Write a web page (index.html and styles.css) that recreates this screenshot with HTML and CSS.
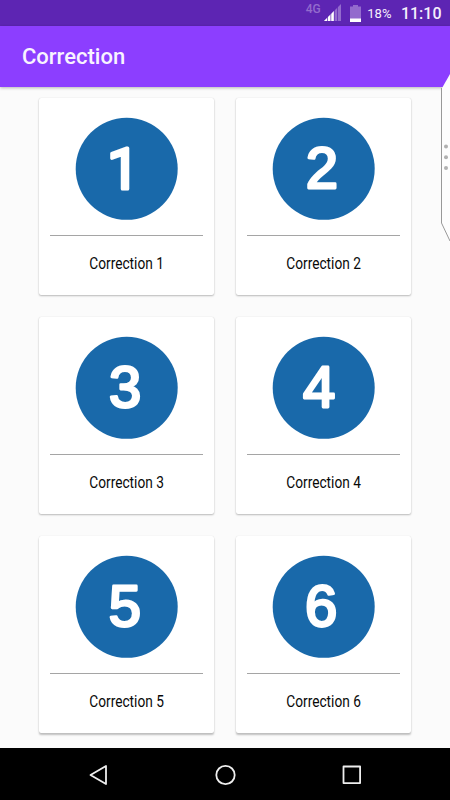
FILE: index.html
```html
<!DOCTYPE html>
<html lang="en">
<head>
<meta charset="utf-8">
<title>Correction</title>
<link rel="stylesheet" href="styles.css">
</head>
<body>
<div class="screen">
  <div class="status">
    <span class="network">4G</span>
    <svg class="signal" width="18" height="17" viewBox="0 0 18 17">
      <path d="M0 17 17 0V17Z" fill="#936bcd"/>
      <path d="M0 17 10 7V17Z" fill="#fff"/>
      <path d="M3.5 10V17M6.8 7V17M10.3 4V17M13.5 0V17" stroke="#5d25b3" stroke-width=".7"/>
    </svg>
    <svg class="battery" width="11" height="17" viewBox="0 0 11 17">
      <path d="M3 0H8V1.5H11V17H0V1.5H3Z" fill="#936bcd"/>
      <path d="M0 13.5H11V17H0Z" fill="#fff"/>
    </svg>
    <span class="percent">18%</span>
    <span class="clock">11:10</span>
  </div>
  <header class="appbar"><h1>Correction</h1></header>
  <main class="cards">
    <article class="card">
      <svg class="badge" viewBox="0 0 102 102"><circle cx="50.7" cy="50.8" r="51"/><text class="one" x="47.2" y="70.5">1</text></svg>
      <p class="label"><span>Correction 1</span></p>
    </article>
    <article class="card">
      <svg class="badge" viewBox="0 0 102 102"><circle cx="50.7" cy="50.8" r="51"/><text x="49" y="70.3">2</text></svg>
      <p class="label"><span>Correction 2</span></p>
    </article>
    <article class="card">
      <svg class="badge" viewBox="0 0 102 102"><circle cx="50.7" cy="50.8" r="51"/><text x="49.2" y="70.3">3</text></svg>
      <p class="label"><span>Correction 3</span></p>
    </article>
    <article class="card">
      <svg class="badge" viewBox="0 0 102 102"><circle cx="50.7" cy="50.8" r="51"/><text x="46.2" y="70.3">4</text></svg>
      <p class="label"><span>Correction 4</span></p>
    </article>
    <article class="card">
      <svg class="badge" viewBox="0 0 102 102"><circle cx="50.7" cy="50.8" r="51"/><text x="48.8" y="70.3">5</text></svg>
      <p class="label"><span>Correction 5</span></p>
    </article>
    <article class="card">
      <svg class="badge" viewBox="0 0 102 102"><circle cx="50.7" cy="50.8" r="51"/><text x="48.2" y="70.3">6</text></svg>
      <p class="label"><span>Correction 6</span></p>
    </article>
  </main>
  <nav class="navbar">
    <svg width="22" height="22" viewBox="0 0 22 22"><path d="M2.5 11 18 2V20Z"/></svg>
    <svg width="22" height="22" viewBox="0 0 22 22"><circle cx="10.5" cy="11" r="9.2"/></svg>
    <svg width="22" height="22" viewBox="0 0 22 22"><rect x="2.5" y="2.5" width="16.6" height="16.6"/></svg>
  </nav>
  <svg class="edge" width="9" height="168" viewBox="0 0 9 168">
    <path d="M9 0 .5 15V149L9 167" fill="#fdfdfd"/>
    <path d="M.5 14V149L9 167" fill="none" stroke="#999"/>
    <g fill="#b0b0b0"><circle cx="5" cy="72.5" r="2"/><circle cx="5" cy="83.2" r="2"/><circle cx="5" cy="94" r="2"/></g>
  </svg>
</div>
</body>
</html>
```
FILE: styles.css
```css
* { box-sizing: border-box; }
body { margin: 0; font-family: Roboto, "Liberation Sans", sans-serif; }
svg { display: block; }
.screen {
  position: relative;
  display: flex;
  flex-direction: column;
  width: 450px;
  height: 800px;
  overflow: hidden;
  background: #fbfbfb;
}
.status {
  display: flex;
  justify-content: flex-end;
  height: 26px;
  padding-right: 8.5px;
  background: #5d25b3;
  color: #f5effc;
}
.network {
  margin: 2px 3px 0 0;
  font-size: 12px;
  line-height: 14px;
  font-weight: 500;
  color: #936bcd;
}
.signal { margin: 4px 8px 0 0; }
.battery { margin: 4.5px 6.5px 0 0; }
.percent { margin-right: 9.5px; font-size: 13px; line-height: 28px; }
.clock { font-size: 16px; line-height: 28px; font-weight: 500; }
.appbar {
  display: flex;
  align-items: center;
  height: 61px;
  padding-left: 22px;
  background: #8c3eff;
  box-shadow: 0 1px 3px rgba(0, 0, 0, .28);
}
.appbar h1 { margin: 1px 0 0; color: #f8f3ff; font-size: 22px; font-weight: 500; line-height: 26px; }
.cards {
  flex: 1;
  display: grid;
  grid-template-columns: 175px 175px;
  grid-auto-rows: 197px;
  align-content: start;
  gap: 22px;
  padding: 11px 0 0 39px;
}
.card {
  display: flex;
  flex-direction: column;
  align-items: center;
  padding: 20px 11px 0;
  border-radius: 2px;
  background: #fff;
  box-shadow: 0 1px 2px rgba(0, 0, 0, .26), 0 0 1px rgba(0, 0, 0, .14);
}
.card:nth-child(n+5) { box-shadow: 0 2px 2px rgba(0, 0, 0, .24), 0 0 1px rgba(0, 0, 0, .16); }
.badge { width: 102px; height: 102px; overflow: visible; }
.badge circle { fill: #1969aa; }
.badge text {
  font-family: "Liberation Sans", sans-serif;
  font-size: 58px;
  text-anchor: middle;
  fill: #fff;
  stroke: #fff;
  stroke-width: 2.8px;
  stroke-linejoin: round;
}
.badge .one {
  font-family: Roboto, sans-serif;
  stroke-width: 3.2px;
}
.label {
  align-self: stretch;
  margin: 15px 0 0;
  padding-top: 18px;
  border-top: 1px solid #a5a5a5;
  text-align: center;
  font-size: 16px;
  line-height: 20px;
  color: #080808;
  white-space: nowrap;
}
.label span { display: inline-block; transform: scaleX(.855); }
.navbar {
  display: flex;
  justify-content: space-between;
  align-items: center;
  height: 52px;
  padding: 2px 87px 0 88px;
  background: #000;
}
.navbar svg { fill: none; stroke: #eee; stroke-width: 1.8; stroke-linejoin: round; }
.edge { position: absolute; right: 0; top: 74px; }
```
